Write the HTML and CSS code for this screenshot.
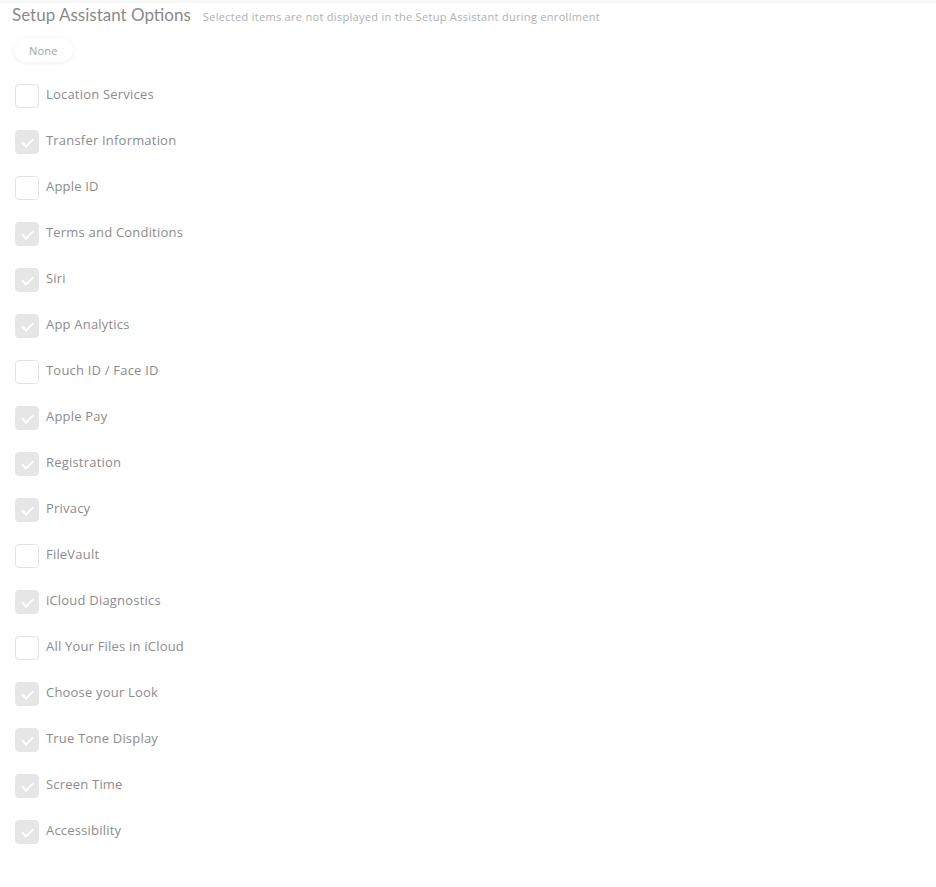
FILE: index.html
```html
<!DOCTYPE html>
<html lang="en">
<head>
  <meta charset="UTF-8">
  <title>Setup Assistant Options</title>
  <link rel="stylesheet" href="styles.css">
</head>
<body>
  <div class="panel">
    <header class="panel-head">
      <h2>Setup Assistant Options</h2>
      <span class="hint">Selected items are not displayed in the Setup Assistant during enrollment</span>
    </header>

    <button class="pill">None</button>

    <ul class="options">
      <li><span class="box"></span>Location Services</li>
      <li class="on"><span class="box"></span>Transfer Information</li>
      <li><span class="box"></span>Apple ID</li>
      <li class="on"><span class="box"></span>Terms and Conditions</li>
      <li class="on"><span class="box"></span>Siri</li>
      <li class="on"><span class="box"></span>App Analytics</li>
      <li><span class="box"></span>Touch ID / Face ID</li>
      <li class="on"><span class="box"></span>Apple Pay</li>
      <li class="on"><span class="box"></span>Registration</li>
      <li class="on"><span class="box"></span>Privacy</li>
      <li><span class="box"></span>FileVault</li>
      <li class="on"><span class="box"></span>iCloud Diagnostics</li>
      <li><span class="box"></span>All Your Files in iCloud</li>
      <li class="on"><span class="box"></span>Choose your Look</li>
      <li class="on"><span class="box"></span>True Tone Display</li>
      <li class="on"><span class="box"></span>Screen Time</li>
      <li class="on"><span class="box"></span>Accessibility</li>
    </ul>
  </div>
</body>
</html>
```

FILE: styles.css
```css
* { margin: 0; padding: 0; box-sizing: border-box; }
body { font-family: 'Open Sans', 'Lato', sans-serif; background: #fff; color: #888; }
.panel { border-top: 3px solid #f7f7f7; padding: 1px 0 0 12px; }
.panel-head { display: flex; align-items: baseline; gap: 12px; height: 24px; }
.panel-head h2 { font-family: 'Lato', sans-serif; font-size: 17px; font-weight: 400; color: #8a8a8a; }
.hint { font-size: 11px; color: #b0b0b0; letter-spacing: 0.3px; }
.pill { margin: 10px 0 0 2px; height: 24px; padding: 0 15px; border: none; border-radius: 12px; background: #fff; box-shadow: 0 1px 4px rgba(0,0,0,0.08); font-family: inherit; font-size: 11px; color: #a0a0a0; letter-spacing: 0.2px; }
.options { list-style: none; margin-top: 9px; padding-left: 3px; }
.options li { display: flex; align-items: center; gap: 7px; height: 46px; font-size: 13px; color: #8c8c8c; letter-spacing: 0.2px; }
.box { width: 24px; height: 24px; border: 1px solid #e2e2e2; border-radius: 4px; margin-top: 4px; position: relative; }
.on .box { background: #e6e6e6; border-color: #e6e6e6; }
.on .box::after { content: ''; position: absolute; left: 8px; top: 5px; width: 5px; height: 9px; border: solid #fff; border-width: 0 2px 2px 0; transform: rotate(45deg); }
```
